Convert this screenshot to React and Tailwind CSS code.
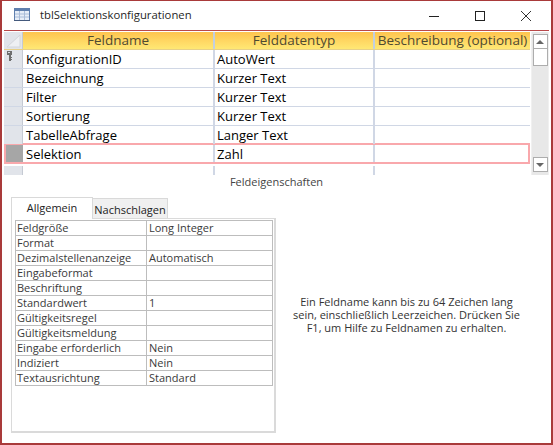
const fields = [
  ["KonfigurationID", "AutoWert"],
  ["Bezeichnung", "Kurzer Text"],
  ["Filter", "Kurzer Text"],
  ["Sortierung", "Kurzer Text"],
  ["TabelleAbfrage", "Langer Text"],
];

const props = [
  ["Feldgröße", "Long Integer"],
  ["Format", ""],
  ["Dezimalstellenanzeige", "Automatisch"],
  ["Eingabeformat", ""],
  ["Beschriftung", ""],
  ["Standardwert", "1"],
  ["Gültigkeitsregel", ""],
  ["Gültigkeitsmeldung", ""],
  ["Eingabe erforderlich", "Nein"],
  ["Indiziert", "Nein"],
  ["Textausrichtung", "Standard"],
];

function TableIcon() {
  return (
    <svg width="16" height="13" viewBox="0 0 16 13">
      <rect x="0" y="0" width="16" height="13" fill="#5f7fae" />
      <rect x="1" y="3" width="14" height="9" fill="#e6edf7" />
      <path d="M1 6h14M1 9h14M5.5 3v9M10.5 3v9" stroke="#a9bcd8" strokeWidth="1" />
      <rect x="0" y="12" width="16" height="1" fill="#44597c" />
    </svg>
  );
}

function KeyIcon() {
  return (
    <svg width="6" height="11" viewBox="0 0 6 11">
      <path d="M0 0h5v4H4v6H2V4H0z" fill="#6e6e6e" />
      <rect x="1" y="1" width="2" height="1" fill="#d8dce4" />
      <rect x="4" y="6" width="1" height="1" fill="#6e6e6e" />
      <rect x="4" y="8" width="1" height="1" fill="#6e6e6e" />
    </svg>
  );
}

function GridRow({ name, type, selector }) {
  return (
    <div className="flex h-[19px] border-b border-[#d0d7e5]">
      <div className="w-[19px] shrink-0 bg-[#e1e4ea] border-r border-[#c5cad3] pl-[3px] pt-[1px]">
        {selector}
      </div>
      <div className="w-[192px] shrink-0 border-r-2 border-[#d0d7e5] pl-[3px] leading-[18px] truncate">{name}</div>
      <div className="w-[160px] shrink-0 border-r-2 border-[#d0d7e5] pl-[2px] leading-[18px]">{type}</div>
      <div className="flex-1" />
    </div>
  );
}

export default function App() {
  return (
    <div
      className="w-[553px] h-[445px] bg-white border-[#a93a3a] border-l-2 border-r-2 border-t border-b-2 overflow-hidden text-[#262626]"
      style={{ fontFamily: '"Open Sans", "Noto Sans", sans-serif' }}
    >
      {/* title bar */}
      <div className="h-[29px] flex items-center">
        <div className="ml-[12px] mb-[3px]"><TableIcon /></div>
        <span className="ml-[10px] text-[11.3px] text-[#1f1f1f]">tblSelektionskonfigurationen</span>
        <div className="ml-auto flex items-center">
          <svg width="12" height="12" viewBox="0 0 12 12" className="mr-[34px]">
            <path d="M1 6.5h10" stroke="#222" strokeWidth="1" />
          </svg>
          <svg width="12" height="12" viewBox="0 0 12 12" className="mr-[34px]">
            <rect x="1.5" y="1.5" width="9" height="9" fill="none" stroke="#222" strokeWidth="1" />
          </svg>
          <svg width="12" height="12" viewBox="0 0 12 12" className="mr-[19px]">
            <path d="M1 1l10 10M11 1L1 11" stroke="#333" strokeWidth="1" />
          </svg>
        </div>
      </div>

      {/* field grid */}
      <div className="flex border-t border-[#b9494a] ml-[2px] mr-[2px] pt-px">
        <div className="w-[528px] text-[13px] text-black">
          <div className="flex h-[18px] border-b border-[#e7d088]">
            <div className="w-[19px] shrink-0 bg-[#e1e4ea] border-r border-[#c5cad3] overflow-hidden">
              <svg width="18" height="18" viewBox="0 0 18 18">
                <path d="M16 3v12H3z" fill="#eef0f4" stroke="#d3d6dc" strokeWidth="1" />
              </svg>
            </div>
            <div className="flex flex-1 bg-gradient-to-b from-[#fec44f] to-[#ffe874] text-[#4f4a30] leading-[17px] text-[13.5px]">
              <div className="w-[192px] shrink-0 border-r-2 border-[#c2cfe0] text-center">Feldname</div>
              <div className="w-[160px] shrink-0 border-r-2 border-[#c2cfe0] text-center">Felddatentyp</div>
              <div className="flex-1 text-center whitespace-nowrap">Beschreibung (optional)</div>
            </div>
          </div>
          {fields.map((f, i) => (
            <GridRow key={f[0]} name={f[0]} type={f[1]} selector={i === 0 ? <KeyIcon /> : null} />
          ))}
          <div className="flex h-[21px] border-2 border-[#f9a8ac] -mt-[2px] mb-[2px]">
            <div className="w-[17px] shrink-0 bg-[#a6a6a6]" />
            <div className="w-[192px] shrink-0 border-r-2 border-[#d0d7e5] pl-[3px] leading-[19px]">Selektion</div>
            <div className="w-[160px] shrink-0 border-r-2 border-[#d0d7e5] pl-[2px] leading-[19px]">Zahl</div>
            <div className="flex-1" />
          </div>
          <div className="flex h-[9px]">
            <div className="w-[19px] shrink-0 bg-[#e1e4ea] border-r border-[#c5cad3]" />
            <div className="w-[192px] shrink-0 border-r-2 border-[#d0d7e5]" />
            <div className="w-[160px] shrink-0 border-r-2 border-[#d0d7e5]" />
          </div>
        </div>
        {/* scrollbar */}
        <div className="w-[18px] ml-px h-[143px] bg-[#e8e8e8] border-x border-[#f0f0f0] flex flex-col items-center pt-[2px] pb-[3px]">
          <div className="w-[15px] h-[15px] bg-white border border-[#adadad] flex items-center justify-center">
            <div className="w-0 h-0 border-x-[4px] border-x-transparent border-b-[4px] border-b-[#666]" />
          </div>
          <div className="w-[15px] h-[17px] bg-white border border-[#adadad] border-t-0" />
          <div className="mt-auto w-[15px] h-[15px] bg-white border border-[#adadad] flex items-center justify-center">
            <div className="w-0 h-0 border-x-[4px] border-x-transparent border-t-[4px] border-t-[#666]" />
          </div>
        </div>
      </div>

      {/* Feldeigenschaften caption */}
      <div className="h-[22px] -mt-px text-center text-[11px] leading-[16px] text-[#444]">Feldeigenschaften</div>

      {/* property pane */}
      <div className="flex">
        <div className="ml-[9px] w-[265px] shrink-0 text-[11px]">
          <div className="flex items-end h-[22px]">
            <div className="w-[82px] h-[22px] bg-white border border-b-0 border-[#d9d9d9] text-center leading-[19px] text-[#222] -mb-px relative z-10">Allgemein</div>
            <div className="w-[75px] h-[20px] bg-[#f0f0f0] border border-l-0 border-b-0 border-[#d9d9d9] text-center leading-[21px] text-[#222] whitespace-nowrap">Nachschlagen</div>
          </div>
          <div className="h-[215px] border-2 border-t border-l border-[#dadada] pl-[3px] pr-[1px] pt-[1px]">
            <div className="border-l border-t border-[#bdbdbd]">
              {props.map((p) => (
                <div key={p[0]} className="flex h-[15px] border-b border-r border-[#bdbdbd] leading-[14px] text-[#3a3a3a]">
                  <div className="w-[131px] shrink-0 border-r border-[#bdbdbd] pl-[1px] whitespace-nowrap overflow-hidden">{p[0]}</div>
                  <div className="pl-[2px] whitespace-nowrap">{p[1]}</div>
                </div>
              ))}
            </div>
          </div>
        </div>
        <div className="flex-1 pt-[99px] pr-[14px] text-center text-[11px] leading-[13px] text-[#333] whitespace-nowrap">
          <div>Ein Feldname kann bis zu 64 Zeichen lang</div>
          <div>sein, einschließlich Leerzeichen. Drücken Sie</div>
          <div>F1, um Hilfe zu Feldnamen zu erhalten.</div>
        </div>
      </div>
    </div>
  );
}
